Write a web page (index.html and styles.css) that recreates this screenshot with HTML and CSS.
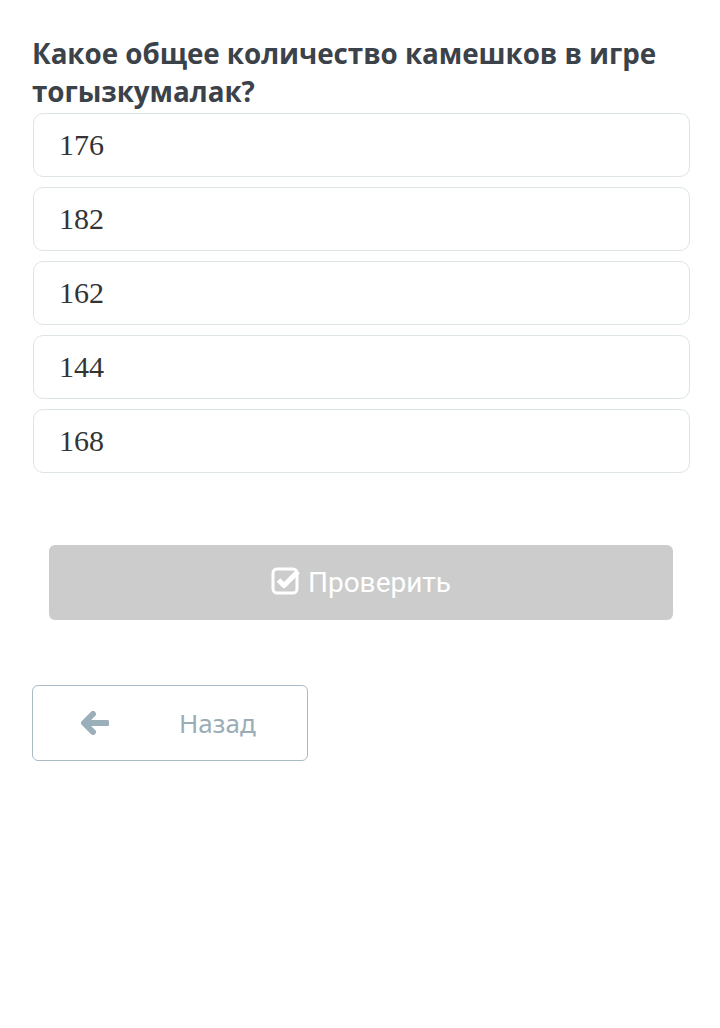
FILE: index.html
```html
<!DOCTYPE html>
<html lang="ru">
<head>
    <meta charset="UTF-8">
    <title>Вопрос</title>
    <link rel="stylesheet" href="styles.css">
</head>
<body>
    <div class="quiz">
        <h2 class="question">Какое общее количество камешков в игре тогызкумалак?</h2>

        <ul class="answers">
            <li class="answer">176</li>
            <li class="answer">182</li>
            <li class="answer">162</li>
            <li class="answer">144</li>
            <li class="answer">168</li>
        </ul>

        <div class="check-row">
            <button class="check-btn" disabled>
                <svg class="check-icon" viewBox="0 0 30 30" width="30" height="30">
                    <rect x="2" y="3" width="24" height="24" rx="4" fill="none" stroke="#fff" stroke-width="3"/>
                    <path d="M7.5 14 L13 19.5 L27 5.5" fill="none" stroke="#fff" stroke-width="5" stroke-linejoin="round"/>
                </svg>
                <span>Проверить</span>
            </button>
        </div>

        <div class="nav-row">
            <button class="back-btn">
                <svg class="arrow" viewBox="0 0 28 24" width="28" height="24">
                    <path d="M12 3 L3 12 L12 21 M4 12 H26" fill="none" stroke="#9aafb9" stroke-width="6" stroke-linecap="round" stroke-linejoin="round"/>
                </svg>
                <span>Назад</span>
            </button>
        </div>
    </div>
</body>
</html>
```

FILE: styles.css
```css
body {
    margin: 0;
    background-color: #fff;
    font-family: "Open Sans", Arial, sans-serif;
}

.quiz {
    padding: 34px 30px 0 32px;
}

.question {
    margin: 0;
    font-size: 27.8px;
    font-weight: 700;
    line-height: 38px;
    color: #3b4249;
    letter-spacing: -0.05px;
}

.answers {
    list-style: none;
    margin: 3px 0 0 1px;
    padding: 0;
    display: flex;
    flex-direction: column;
    gap: 10px;
}

.answer {
    height: 64px;
    box-sizing: border-box;
    border: 1px solid #dde5e5;
    border-radius: 10px;
    padding: 0 0 0 25px;
    display: flex;
    align-items: center;
    font-family: "Liberation Serif", "DejaVu Serif", serif;
    font-size: 30px;
    color: #333;
}

.check-row {
    margin-top: 72px;
    padding: 0 17px;
}

.check-btn {
    width: 100%;
    height: 75px;
    border: none;
    border-radius: 6px;
    background-color: #cccccc;
    color: #fff;
    font-family: Roboto, Arial, sans-serif;
    font-size: 28px;
    display: flex;
    align-items: center;
    justify-content: center;
    gap: 7px;
    padding: 0;
}

.check-icon {
    margin-top: -4px;
}

.nav-row {
    margin-top: 65px;
}

.back-btn {
    width: 276px;
    height: 76px;
    background: #fff;
    border: 1px solid #a9bcc5;
    border-radius: 6px;
    display: flex;
    align-items: center;
    padding: 0 0 0 48px;
    font-family: "Noto Sans", Lato, sans-serif;
    font-size: 26px;
    color: #9aadb6;
}

.back-btn span {
    margin-left: 70px;
}
```
